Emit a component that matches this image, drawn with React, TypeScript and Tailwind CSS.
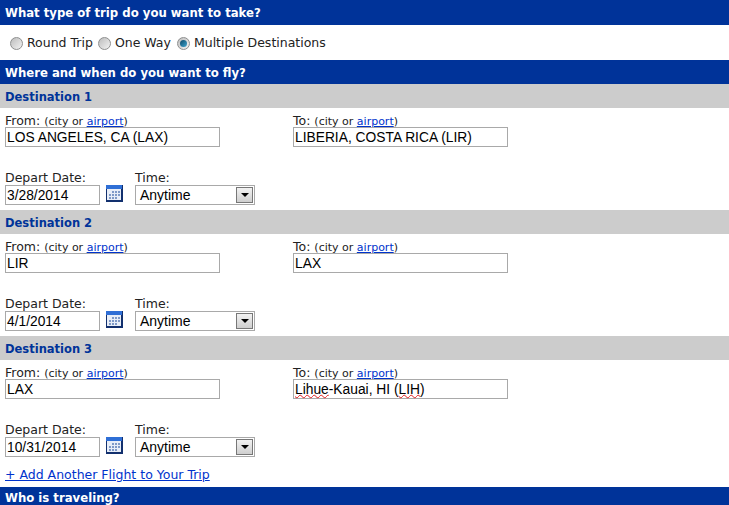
import React from 'react';

const SectionBar = ({ title, className = '' }: { title: string; className?: string }) => (
    <div className={`bg-[#003399] text-white font-bold text-[11.7px] leading-[26px] px-[5px] font-['DejaVu_Sans',sans-serif] ${className}`}>
        {title}
    </div>
);

const Radio = ({ checked = false }: { checked?: boolean }) => (
    <span className="w-[13px] h-[13px] -mt-[1px] rounded-full border border-[#8e8f8f] bg-gradient-to-br from-[#bcbcbc] to-[#f4f4f4] flex items-center justify-center shrink-0">
        {checked && <span className="w-[7px] h-[7px] rounded-full bg-gradient-to-br from-[#0d4a6b] to-[#3fa5cf]" />}
    </span>
);

const CalendarIcon = () => (
    <svg width="17" height="17" viewBox="0 0 17 17">
        <rect x="0" y="0" width="17" height="17" fill="#12306e" />
        <rect x="0" y="0" width="16" height="4" fill="#2f6fd6" />
        <rect x="1" y="4" width="14" height="11" fill="#e8eef8" />
        <g fill="#7f9ac8">
            <rect x="6" y="6" width="2" height="2" />
            <rect x="9" y="6" width="2" height="2" />
            <rect x="12" y="6" width="2" height="2" />
            <rect x="3" y="9" width="2" height="2" />
            <rect x="6" y="9" width="2" height="2" />
            <rect x="9" y="9" width="2" height="2" />
            <rect x="12" y="9" width="2" height="2" />
            <rect x="3" y="12" width="2" height="2" />
            <rect x="6" y="12" width="2" height="2" />
            <rect x="9" y="12" width="2" height="2" />
        </g>
    </svg>
);

const PlaceLabel = ({ label }: { label: string }) => (
    <div className="h-[19px] leading-[25px] text-[12.5px] text-[#222] whitespace-nowrap">
        {label}: <span className="text-[11px]">(city or <a className="text-[#0033cc] underline">airport</a>)</span>
    </div>
);

const Field = ({ children, className = '' }: { children: React.ReactNode; className?: string }) => (
    <div className={`h-[20px] border border-[#a9a9a9] bg-white pl-[1px] text-[13.8px] leading-[20px] text-black font-['Liberation_Sans',sans-serif] whitespace-nowrap ${className}`}>
        {children}
    </div>
);

const Destination = ({ n, from, to, date }: { n: number; from: string; to: React.ReactNode; date: string }) => (
    <section className="h-[126px] font-['DejaVu_Sans',sans-serif]">
        <div className="h-[24px] bg-[#cccccc] text-[#003399] font-bold text-[11.5px] leading-[26px] px-[5px]">
            Destination {n}
        </div>
        <div className="flex pl-[5px]">
            <div className="w-[288px]">
                <PlaceLabel label="From" />
                <Field className="w-[215px]">{from}</Field>
            </div>
            <div>
                <PlaceLabel label="To" />
                <Field className="w-[215px]">{to}</Field>
            </div>
        </div>
        <div className="flex pt-[19px] pl-[5px]">
            <div className="w-[95px]">
                <div className="h-[19px] leading-[24px] text-[12.5px] text-[#222]">Depart Date:</div>
                <Field>{date}</Field>
            </div>
            <div className="pt-[19px] ml-[6px] mr-[12px]">
                <CalendarIcon />
            </div>
            <div>
                <div className="h-[19px] leading-[24px] text-[12.5px] text-[#222]">Time:</div>
                <div className="w-[120px] h-[20px] border border-[#a9a9a9] flex font-['Liberation_Sans',sans-serif] text-[14px] leading-[18px] text-black">
                    <span className="flex-1 pl-[4px]">Anytime</span>
                    <span className="w-[17px] m-[1px] border border-[#777] bg-gradient-to-b from-[#f2f2f2] to-[#cfcfcf] flex items-center justify-center">
                        <span className="border-x-[4px] border-x-transparent border-t-[4px] border-t-black" />
                    </span>
                </div>
            </div>
        </div>
    </section>
);

const Misspelled = ({ children }: { children: React.ReactNode }) => (
    <span className="underline decoration-wavy decoration-[#e02020] decoration-1 underline-offset-[0px]">{children}</span>
);

export default function App() {
    return (
        <div className="w-[729px] h-[505px] overflow-hidden bg-white font-['DejaVu_Sans',sans-serif]">
            <SectionBar title="What type of trip do you want to take?" className="h-[25px]" />
            <div className="h-[35px] flex items-center pt-[2px] pl-[10px] text-[12.5px] text-[#222]">
                <Radio />
                <span className="ml-[4px] mr-[5px]">Round Trip</span>
                <Radio />
                <span className="ml-[4px] mr-[6px]">One Way</span>
                <Radio checked />
                <span className="ml-[4px]">Multiple Destinations</span>
            </div>
            <SectionBar title="Where and when do you want to fly?" className="h-[24px]" />
            <Destination n={1} from="LOS ANGELES, CA (LAX)" to="LIBERIA, COSTA RICA (LIR)" date="3/28/2014" />
            <Destination n={2} from="LIR" to="LAX" date="4/1/2014" />
            <Destination n={3} from="LAX" date="10/31/2014" to={
                <>
                    <Misspelled>Lihue</Misspelled>-Kauai, HI (<Misspelled>LIH</Misspelled>)
                </>
            } />
            <div className="h-[25px] pl-[5px] text-[12.5px] leading-[26px]">
                <a className="text-[#0033cc] underline">+ Add Another Flight to Your Trip</a>
            </div>
            {/* bar runs off the bottom of the window, so its line box is kept short */}
            <div className="h-[18px] pt-[5px] px-[5px] bg-[#003399] text-white font-bold text-[11.7px] leading-[13px]">
                Who is traveling?
            </div>
        </div>
    );
}
